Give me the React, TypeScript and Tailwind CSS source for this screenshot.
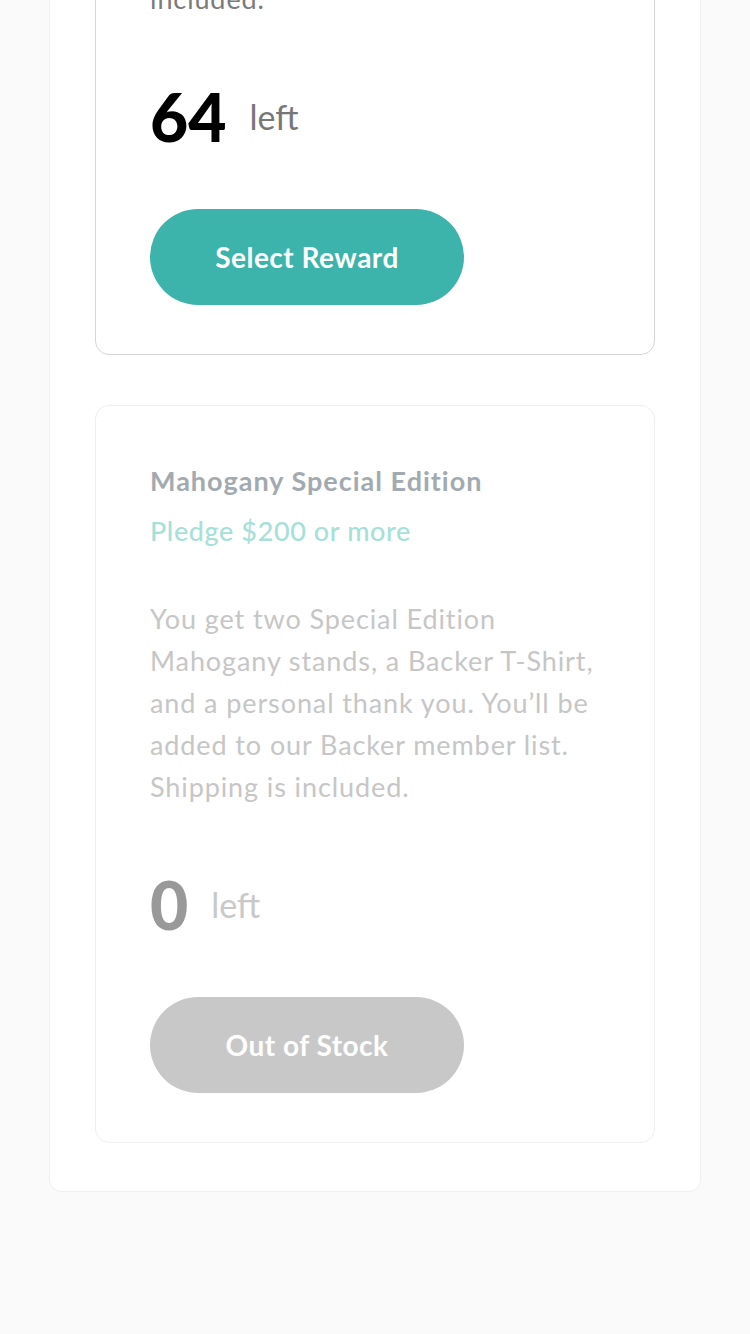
type Reward = {
  title: string
  pledge: string
  lines: string[]
  left: number
}

const rewards: Reward[] = [
  {
    title: 'Black Edition Stand',
    pledge: 'Pledge $75 or more',
    lines: [
      'You get a Black Special Edition',
      'computer stand and a personal',
      'thank you. You’ll be added to our',
      'Backer member list. Shipping is',
      'included.',
    ],
    left: 64,
  },
  {
    title: 'Mahogany Special Edition',
    pledge: 'Pledge $200 or more',
    lines: [
      'You get two Special Edition',
      'Mahogany stands, a Backer T-Shirt,',
      'and a personal thank you. You’ll be',
      'added to our Backer member list.',
      'Shipping is included.',
    ],
    left: 0,
  },
]

function RewardCard({ reward }: { reward: Reward }) {
  const out = reward.left === 0
  return (
    <div
      className={
        'rounded-[14px] border bg-white pt-[55px] px-[54px] pb-[49px] ' +
        (out ? 'border-[#efefef]' : 'border-[#d6d6d6]')
      }
    >
      <h3
        className={
          'text-[27px] leading-[40px] font-bold tracking-[1px] ' +
          (out ? 'text-[#a2aab0]' : 'text-black')
        }
      >
        {reward.title}
      </h3>
      <p
        className={
          'mt-[10px] text-[27px] leading-[40px] font-medium tracking-[0.6px] ' +
          (out ? 'text-[#a6e0d9]' : 'text-[#3cb4ac]')
        }
      >
        {reward.pledge}
      </p>
      <p
        className={
          'mt-[47px] text-[27px] leading-[42px] tracking-[0.9px] ' +
          (out ? 'text-[#c6c6c6]' : 'text-[#7a7a7a]')
        }
      >
        {reward.lines.map((line) => (
          <span key={line} className="block whitespace-nowrap">
            {line}
          </span>
        ))}
      </p>
      <div className="mt-[61px] flex h-[72px] items-center gap-[23px]">
        <span
          className={
            'text-[66px] leading-none font-black ' +
            (out ? 'text-[#999999]' : 'text-black')
          }
        >
          {reward.left}
        </span>
        <span
          className={
            'text-[34px] leading-none ' + (out ? 'text-[#c9c9c9]' : 'text-[#777777]')
          }
        >
          left
        </span>
      </div>
      <button
        className={
          'mt-[56px] flex h-[96px] w-[314px] items-center justify-center rounded-full text-[28px] font-bold tracking-[0.5px] text-white ' +
          (out ? 'bg-[#c8c8c8]' : 'bg-[#3cb3ab]')
        }
        disabled={out}
      >
        {out ? 'Out of Stock' : 'Select Reward'}
      </button>
    </div>
  )
}

export default function App() {
  return (
    <div
      className="min-h-screen bg-[#fafafa] overflow-hidden"
      style={{ fontFamily: 'Lato, "Open Sans", sans-serif' }}
    >
      <div className="mx-[49px] -mt-[432px] rounded-[12px] border border-[#efefef] bg-white px-[45px] pt-[48px] pb-[48px]">
        <div className="flex flex-col gap-[50px]">
          {rewards.map((r) => (
            <RewardCard key={r.title} reward={r} />
          ))}
        </div>
      </div>
    </div>
  )
}
